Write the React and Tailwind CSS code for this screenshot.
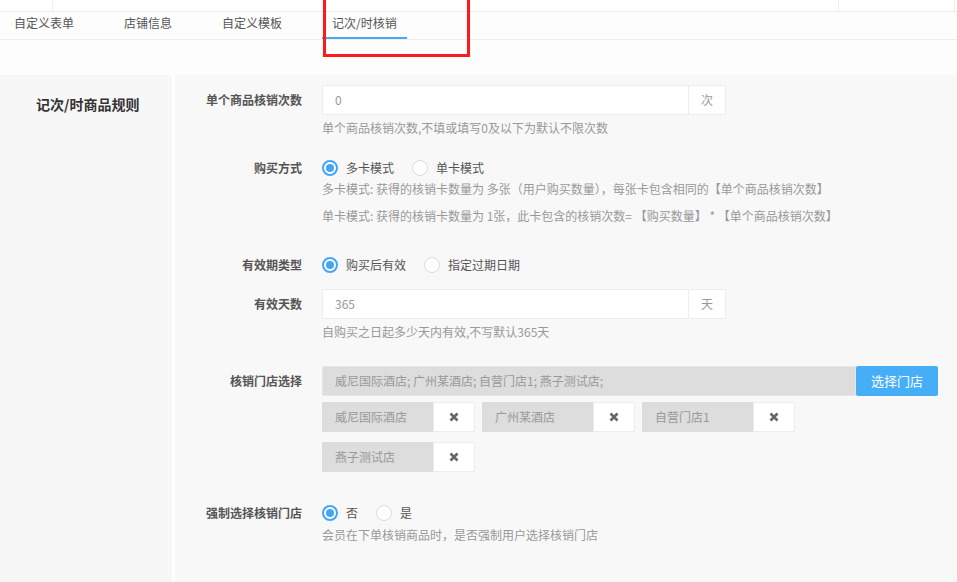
import React from "react";

const font = "font-['Noto_Sans_CJK_SC','Liberation_Sans',sans-serif]";

function Radio({ checked }) {
  if (checked) {
    return (
      <span className="w-4 h-4 rounded-full border-2 border-[#42a5f5] bg-white flex items-center justify-center shrink-0">
        <span className="w-[8px] h-[8px] rounded-full bg-[#42a5f5]" />
      </span>
    );
  }
  return <span className="w-4 h-4 rounded-full border border-[#dcdcdc] bg-white shrink-0" />;
}

function RadioGroup({ options, gaps }) {
  return (
    <div className="flex items-center h-5">
      {options.map((opt, i) => (
        <label key={opt.label} className={`flex items-center ${gaps[i]}`}>
          <Radio checked={opt.checked} />
          <span className="ml-2 text-[12px] leading-5 text-[#555]">{opt.label}</span>
        </label>
      ))}
    </div>
  );
}

function Row({ label, className = "", labelClass = "", children }) {
  return (
    <div className={`flex ${className}`}>
      <div className={`w-[127px] shrink-0 text-right text-[12px] font-bold text-[#555] ${labelClass}`}>{label}</div>
      <div className="ml-5 flex flex-col">{children}</div>
    </div>
  );
}

function Help({ children, className = "" }) {
  return <div className={`text-[12px] leading-5 text-[#999] ${className}`}>{children}</div>;
}

function Tag({ name }) {
  return (
    <div className="flex h-[30px]">
      <div className="w-[111px] bg-[#dddddd] pl-[13px] text-[12px] leading-[30px] text-[#999]">{name}</div>
      <div className="w-[42px] bg-white border border-[#eeeeee] flex items-center justify-center">
        <svg width="10" height="10" viewBox="0 0 10 10">
          <path d="M1.5 1.5 L8.5 8.5 M8.5 1.5 L1.5 8.5" stroke="#666" strokeWidth="2.6" strokeLinecap="butt" />
        </svg>
      </div>
    </div>
  );
}

function Tabs() {
  const tabs = ["自定义表单", "店铺信息", "自定义模板", "记次/时核销"];
  return (
    <div className="h-[28px] border-b border-[#eeeeee] bg-[#fdfdfd] flex pl-[4px] gap-[30px]">
      {tabs.map((t, i) => (
        <div
          key={t}
          className={`px-[10px] text-[12px] leading-[20px] pt-[1px] text-[#555] ${
            i === 3 ? "border-b-2 border-[#4aa8f0]" : ""
          }`}
        >
          {t}
        </div>
      ))}
    </div>
  );
}

export default function App() {
  const stores = ["威尼国际酒店", "广州某酒店", "自营门店1", "燕子测试店"];

  return (
    <div className={`relative w-[957px] h-[582px] overflow-hidden bg-white ${font}`}>
      {/* top strip */}
      <div className="h-[12px] border-b border-[#eeeeee] flex">
        <div className="w-[53px] border-r border-[#eeeeee]" />
        <div className="w-[786px] border-r border-[#eeeeee]" />
        <div className="w-[116px] border-r border-[#eeeeee]" />
      </div>
      <Tabs />
      <div className="h-[35px] bg-[#fdfdfd]" />

      <div className="flex h-[507px]">
        <div className="w-[172px] bg-[#f7f7f7] pt-[19px] pl-[36px]">
          <div className="text-[14px] leading-5 font-bold text-[#333]">记次/时商品规则</div>
        </div>
        <div className="w-[3px] bg-white" />
        <div className="flex-1 bg-[#f8f8f8] pt-[10px]">
          {/* 单个商品核销次数 */}
          <Row label="单个商品核销次数" labelClass="leading-[30px]">
            <div className="flex h-[30px]">
              <div className="w-[367px] bg-white border border-[#eeeeee] pl-[12px] text-[12px] leading-[28px] text-[#999]">0</div>
              <div className="w-[37px] bg-white border border-l-0 border-[#eeeeee] text-center text-[12px] leading-[28px] text-[#999]">次</div>
            </div>
            <Help className="mt-[3px]">单个商品核销次数,不填或填写0及以下为默认不限次数</Help>
          </Row>

          {/* 购买方式 */}
          <Row label="购买方式" className="mt-5" labelClass="leading-5">
            <RadioGroup
              options={[{ label: "多卡模式", checked: true }, { label: "单卡模式" }]}
              gaps={["mr-[18px]", ""]}
            />
            <Help className="mt-[1px]">多卡模式: 获得的核销卡数量为 多张（用户购买数量），每张卡包含相同的【单个商品核销次数】</Help>
            <Help className="mt-[7px]">单卡模式: 获得的核销卡数量为 1张，此卡包含的核销次数= 【购买数量】 * 【单个商品核销次数】</Help>
          </Row>

          {/* 有效期类型 */}
          <Row label="有效期类型" className="mt-[29px]" labelClass="leading-5">
            <RadioGroup
              options={[{ label: "购买后有效", checked: true }, { label: "指定过期日期" }]}
              gaps={["mr-[18px]", ""]}
            />
          </Row>

          {/* 有效天数 */}
          <Row label="有效天数" className="mt-[14px]" labelClass="leading-[30px]">
            <div className="flex h-[30px]">
              <div className="w-[367px] bg-white border border-[#eeeeee] pl-[12px] text-[12px] leading-[28px] text-[#999]">365</div>
              <div className="w-[37px] bg-white border border-l-0 border-[#eeeeee] text-center text-[12px] leading-[28px] text-[#999]">天</div>
            </div>
            <Help className="mt-[3px]">自购买之日起多少天内有效,不写默认365天</Help>
          </Row>

          {/* 核销门店选择 */}
          <Row label="核销门店选择" className="mt-[24px]" labelClass="leading-[30px]">
            <div className="flex h-[30px]">
              <div className="w-[534px] bg-[#dddddd] border border-[#e6e6e6] pl-[12px] text-[12px] leading-[28px] text-[#999]">
                威尼国际酒店; 广州某酒店; 自营门店1; 燕子测试店;
              </div>
              <button className="w-[82px] bg-[#46aef7] rounded-[2px] text-white text-[13px] leading-[30px]">选择门店</button>
            </div>
            <div className="mt-[6px] flex flex-wrap w-[480px] gap-x-[7px] gap-y-[10px]">
              {stores.map((s) => (
                <Tag key={s} name={s} />
              ))}
            </div>
          </Row>

          {/* 强制选择核销门店 */}
          <Row label="强制选择核销门店" className="mt-[31px]" labelClass="leading-5">
            <RadioGroup options={[{ label: "否", checked: true }, { label: "是" }]} gaps={["mr-[18px]", ""]} />
            <Help className="mt-[2px]">会员在下单核销商品时，是否强制用户选择核销门店</Help>
          </Row>
        </div>
      </div>

      {/* red annotation box */}
      <div className="absolute left-[323px] top-[-3px] w-[147px] h-[60px] border-[3px] border-[#ff1a1a]" />
    </div>
  );
}
